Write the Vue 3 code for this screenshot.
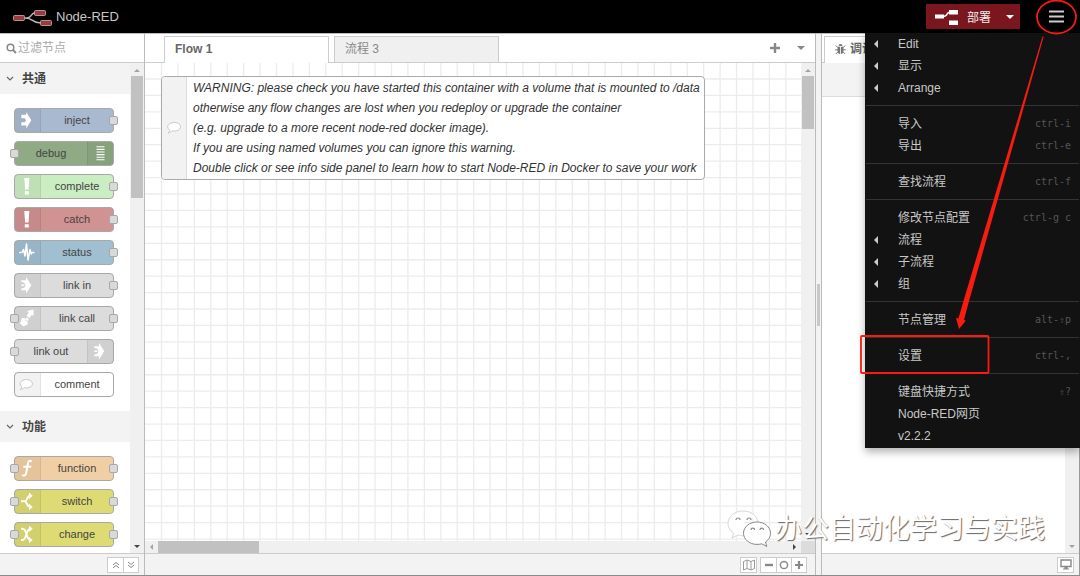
<script setup>
import { ref } from 'vue'

const filter = ref('')

const categories = [
  {
    name: '共通',
    nodes: [
      { label: 'inject', color: '#a9b9cf', icon: 'inject', out: true },
      { label: 'debug', color: '#8faa84', icon: 'debug', in: true, right: true },
      { label: 'complete', color: '#caedc1', icon: 'alert', out: true },
      { label: 'catch', color: '#d19292', icon: 'alert', out: true },
      { label: 'status', color: '#a0bfd1', icon: 'status', out: true },
      { label: 'link in', color: '#dcdcdc', icon: 'link', out: true },
      { label: 'link call', color: '#dcdcdc', icon: 'call', in: true, out: true },
      { label: 'link out', color: '#dcdcdc', icon: 'link', in: true, right: true },
      { label: 'comment', color: '#ffffff', icon: 'comment' }
    ]
  },
  {
    name: '功能',
    nodes: [
      { label: 'function', color: '#f1cfa4', icon: 'function', in: true, out: true },
      { label: 'switch', color: '#dedb74', icon: 'switch', in: true, out: true },
      { label: 'change', color: '#dedb74', icon: 'change', in: true, out: true }
    ]
  }
]

const menu = [
  [{ label: 'Edit', sub: true }, { label: '显示', sub: true }, { label: 'Arrange', sub: true }],
  [{ label: '导入', key: 'ctrl-i' }, { label: '导出', key: 'ctrl-e' }],
  [{ label: '查找流程', key: 'ctrl-f' }],
  [
    { label: '修改节点配置', key: 'ctrl-g c' },
    { label: '流程', sub: true },
    { label: '子流程', sub: true },
    { label: '组', sub: true }
  ],
  [{ label: '节点管理', key: 'alt-⇧p' }],
  [{ label: '设置', key: 'ctrl-,' }],
  [{ label: '键盘快捷方式', key: '⇧?' }, { label: 'Node-RED网页' }, { label: 'v2.2.2' }]
]

const warning = [
  'WARNING: please check you have started this container with a volume that is mounted to /data',
  'otherwise any flow changes are lost when you redeploy or upgrade the container',
  '(e.g. upgrade to a more recent node-red docker image).',
  'If you are using named volumes you can ignore this warning.',
  'Double click or see info side panel to learn how to start Node-RED in Docker to save your work'
]

const step = 16.43
const lines = Array.from({ length: 130 }, (_, i) => i * step)
</script>

<template>
  <div class="app">
    <header class="top">
      <svg class="logo" width="40" height="18" viewBox="0 0 40 18" aria-hidden="true">
        <path d="M12 9C20 9 17 4 22 4M12 9C21 9 18 14 28 14" fill="none" stroke="#bbb" stroke-width="1.4" />
        <g fill="#9c3a3e" stroke="#c9b3b3" stroke-width="0.8">
          <rect x="0.5" y="6.5" width="11" height="5" rx="1" />
          <rect x="21.5" y="1.5" width="11" height="5" rx="1" />
          <rect x="27.5" y="11.5" width="11" height="5" rx="1" />
        </g>
      </svg>
      <span class="brand">Node-RED</span>
      <button class="deploy" type="button">
        <svg width="24" height="16" viewBox="0 0 24 16" aria-hidden="true">
          <path d="M8 7.5C14 7.5 10 3 16 3" fill="none" stroke="#fff" stroke-width="1.4" />
          <path d="M0 5.5h9v4H0zM14 1h9v4.5h-9zM14 11.5h9V16h-9z" fill="#fff" />
        </svg>
        <span>部署</span>
        <i class="caret light"></i>
      </button>
      <button class="burger" type="button" aria-label="菜单">
        <svg width="15" height="14" viewBox="0 0 15 14"><path d="M0 1.5h15M0 6.500h15M0 11.500h15" stroke="#ccc" stroke-width="2.2" /></svg>
      </button>
    </header>

    <main class="main">
      <aside class="palette">
        <label class="search">
          <svg width="11" height="11" viewBox="0 0 11 11" aria-hidden="true">
            <circle cx="4.5" cy="4.5" r="3.300" fill="none" stroke="#888" stroke-width="1.5" />
            <path d="M7 7l3 3" stroke="#888" stroke-width="1.8" />
          </svg>
          <input v-model="filter" type="text" placeholder="过滤节点" aria-label="过滤节点" />
        </label>
        <div class="scroller">
          <div class="list">
            <section v-for="c in categories" :key="c.name">
              <h2>
                <svg width="8" height="6" viewBox="0 0 8 6" aria-hidden="true"><path d="M1 1l3 3 3-3" fill="none" stroke="#666" stroke-width="1.2" /></svg>
                {{ c.name }}
              </h2>
              <div class="nodes">
                <div v-for="n in c.nodes" :key="n.label" class="node" :class="{ right: n.right }" :style="{ backgroundColor: n.color }">
                  <span class="icon">
                    <svg width="25" height="23" viewBox="1 1 25 23" fill="#fff" aria-hidden="true">
                      <path v-if="n.icon === 'inject'" d="M7.300 6.700h5V4L17.300 12.300l-5 8.200v-3H7.300v-3.200h3.500l1.200-2-1.200-2H7.300z" />
                      <path v-else-if="n.icon === 'debug'" d="M9.500 5.800h8M9.500 8.400h8M9.500 11h8M9.500 13.600h8M9.500 16.200h8M9.500 18.800h8" stroke="#fff" stroke-width="1.1" />
                      <path v-else-if="n.icon === 'alert'" d="M10.300 4h5l-.8 11.500h-3.400zM10.800 17.200h4v3.200h-4z" />
                      <path v-else-if="n.icon === 'status'" d="M5 12.500h3l1.500-3 1.500 6.500L12.500 4l1.500 16 2-10.500 1.300 4.500.7-1.500h2.500" fill="none" stroke="#fff" stroke-width="1.500" stroke-linejoin="round" />
                      <path v-else-if="n.icon === 'link'" d="M12 4l5.300 8.300L12 20.500v-3.200H7.300v-1.800c5.500 0 5.500-6.400 0-6.400V7.300H12zM7.300 11.500h3v1.600h-3z" />
                      <g v-else-if="n.icon === 'call'">
                        <path d="M13 5l6.500-1.500V10l-1.700-1.200-2.300 3.200-3-2.200 2.300-3.200z" />
                        <path d="M8 12l3 .3a3 3 0 0 0 2.800 3.400l-.3 2.800-4 2-3.500-3z" />
                        <circle cx="13" cy="13.200" r="1.600" />
                      </g>
                      <path v-else-if="n.icon === 'comment'" d="M12.500 7.500c3.500 0 6 1.900 6 4.200s-2.500 4.300-6 4.300c-.9 0-1.500-.1-2.300-.3-.8.900-2 1.700-3.900 1.900.9-.8 1.400-1.700 1.500-2.700-1-.8-1.600-1.900-1.600-3.200 0-2.300 2.700-4.200 6.300-4.200z" stroke="#c8c8c8" stroke-width="1" />
                      <path v-else-if="n.icon === 'function'" d="M17.800 5.500c-2-1.500-3.500-.5-4 2.500l-1.500 8.500c-.4 2.500-1.800 4-4.200 2.500M9.300 10.800h8" fill="none" stroke="#fff" stroke-width="1.900" />
                      <g v-else-if="n.icon === 'switch'">
                        <path d="M7 12.300h4c2.500 0 1.500-5.600 5.500-5.600M10.500 12.300c3 0 2 5.700 6 5.700" fill="none" stroke="#fff" stroke-width="2" />
                        <path d="M15 3.500l3.700 3.200L15 10zM15 14.800l3.700 3.200-3.700 3.300z" />
                      </g>
                      <g v-else>
                        <path d="M7 6.700h1.500c5 0 3 11.300 8 11.300M7 18h1.500c5 0 3-11.300 8-11.300" fill="none" stroke="#fff" stroke-width="1.900" />
                        <path d="M15 3.500l3.700 3.200L15 10zM15 14.800l3.700 3.200-3.700 3.300z" />
                      </g>
                    </svg>
                  </span>
                  <span class="label">{{ n.label }}</span>
                  <i v-if="n.in" class="port in"></i>
                  <i v-if="n.out" class="port out"></i>
                </div>
              </div>
            </section>
          </div>
          <div class="vbar palette-bar"><i class="up"></i><b></b><i class="down dark"></i></div>
        </div>
        <footer class="foot end">
          <div class="group">
            <button type="button" aria-label="全部折叠"><svg width="8" height="8" viewBox="0 0 8 8"><path d="M1 4l3-2.500L7 4M1 7l3-2.500L7 7" fill="none" stroke="#888" /></svg></button>
            <button type="button" aria-label="全部展开"><svg width="8" height="8" viewBox="0 0 8 8"><path d="M1 1l3 2.500L7 1M1 4l3 2.500L7 4" fill="none" stroke="#888" /></svg></button>
          </div>
        </footer>
      </aside>

      <section class="work">
        <nav class="tabs">
          <a class="tab active" href="#flow1">Flow 1</a>
          <a class="tab" href="#flow3">流程 3</a>
          <span class="tools">
            <button type="button" aria-label="添加流程"><svg width="10" height="10" viewBox="0 0 10 10"><path d="M5 0v10M0 5h10" stroke="#888" stroke-width="2.400" /></svg></button>
            <button type="button" aria-label="流程列表"><i class="caret"></i></button>
          </span>
        </nav>
        <div class="canvas-row">
          <div class="canvas">
            <svg class="grid" width="100%" height="100%" aria-hidden="true">
              <g stroke="#ececec" stroke-width="1.300">
                <line v-for="p in lines" :key="'v' + p" :x1="p + 16.5" :x2="p + 16.5" y1="0" y2="100%" />
                <line v-for="p in lines" :key="'h' + p" :y1="p + 16" :y2="p + 16" x1="0" x2="100%" />
              </g>
            </svg>
            <div class="note">
              <span class="note-icon">
                <svg width="16" height="14" viewBox="0 0 16 14" aria-hidden="true">
                  <path d="M8.500 1.500c3.500 0 6 1.900 6 4.200s-2.500 4.300-6 4.300c-.9 0-1.500-.1-2.300-.3-.8.900-2 2-4.200 2.200 1.100-.8 1.700-2 1.800-3C2.700 8.100 1.700 7 1.700 5.700c0-2.300 3.200-4.200 6.800-4.200z" fill="#fff" stroke="#c8c8c8" />
                </svg>
              </span>
              <p><span v-for="w in warning" :key="w">{{ w }}</span></p>
            </div>
          </div>
          <div class="vbar work-bar"><i class="up"></i><b></b><i class="down dark"></i></div>
        </div>
        <div class="hbar"><i class="prev"></i><b></b><i class="next"></i><em></em></div>
        <footer class="foot end work-foot">
          <div class="group">
            <button type="button" aria-label="导航器"><svg width="12" height="12" viewBox="0 0 12 12"><path d="M.5 2.500L4 1l4 1.500L11.500 1v8.500L8 11 4 9.500.5 11zM4 1v8.500M8 2.500V11" fill="none" stroke="#999" /></svg></button>
          </div>
          <div class="group">
            <button type="button" aria-label="缩小"><svg width="10" height="10" viewBox="0 0 10 10"><path d="M1 5h8" stroke="#888" stroke-width="2.400" /></svg></button>
            <button type="button" aria-label="重置缩放"><svg width="10" height="10" viewBox="0 0 10 10"><circle cx="5" cy="5" r="3.600" fill="none" stroke="#888" stroke-width="1.500" /></svg></button>
            <button type="button" aria-label="放大"><svg width="10" height="10" viewBox="0 0 10 10"><path d="M5 1v8M1 5h8" stroke="#888" stroke-width="2.200" /></svg></button>
          </div>
        </footer>
      </section>

      <div class="separator"><i></i></div>

      <aside class="side">
        <nav class="tabs side-tabs">
          <a class="tab active" href="#debug">
            <svg width="11" height="12" viewBox="0 0 11 12" aria-hidden="true">
              <path d="M3.500 3a2 2 0 0 1 4 0zM2.500 3.800h2.600V11C3.500 11 2.500 9.500 2.500 8zM5.900 3.800h2.600V8c0 1.500-1 3-2.600 3z" fill="#777" />
              <path d="M.8 2.500l2 2M10.200 2.500l-2 2M.2 6.800h2.600M8.200 6.800h2.600M.8 11l2-2M10.200 11l-2-2" stroke="#777" />
            </svg>
            调试
          </a>
        </nav>
        <div class="side-tools"></div>
        <div class="side-body"><div class="vbar"><span></span><i class="down"></i></div></div>
        <footer class="foot end side-foot">
          <div class="group">
            <button type="button" aria-label="打开窗口"><svg width="12" height="11" viewBox="0 0 12 11"><path d="M1 1h10v6.500H1z" fill="none" stroke="#888" stroke-width="1.400" /><path d="M4.500 8h3v1.500H9v1H3v-1h1.500z" fill="#888" /></svg></button>
          </div>
        </footer>
      </aside>
    </main>

    <ul class="menu">
      <template v-for="(g, i) in menu" :key="i">
        <li v-if="i" class="divider"></li>
        <li v-for="m in g" :key="m.label">
          <a href="#menu"><i :class="{ arrow: m.sub }"></i><span>{{ m.label }}</span><kbd>{{ m.key }}</kbd></a>
        </li>
      </template>
    </ul>

    <svg class="marks" width="230" height="380" viewBox="850 0 230 380" aria-hidden="true">
      <ellipse cx="1056.500" cy="17" rx="19.500" ry="16.500" fill="none" stroke="#f71b10" stroke-width="1.800" />
      <path d="M1042.500 36.500h1.200L968.500 303l-4.500 17 1.800.8-6.800 8.200-3-11 2.400.6L963.500 301z" fill="#f71b10" />
      <rect x="861" y="336" width="127.500" height="37" rx="1" fill="none" stroke="#f71b10" stroke-width="1.800" />
    </svg>

    <div class="watermark">
      <svg width="46" height="40" viewBox="0 0 46 40" aria-hidden="true">
        <path d="M16 2C7.500 2 1 7.500 1 14.500c0 4 2 7 5.500 9.500L5 29l6-3c1.500.5 3.500.8 6 .8M31 13C30 6.500 24 2 16 2" fill="#fff" stroke="#ccc" stroke-width="0.800" />
        <path d="M30 13c7.500 0 13.500 5 13.500 11.200 0 3.800-2 6.800-5 8.800l1.300 4.500-5-2.700c-1.500.4-3 .6-4.800.6-7.500 0-13.500-5-13.500-11.200S22.500 13 30 13z" fill="#fff" stroke="#888" stroke-width="1" />
        <g fill="none" stroke="#888" stroke-width="1.200"><path d="M9 11a2 2 0 0 1 4 0M20 11a2 2 0 0 1 4 0M24 21a1.800 1.800 0 0 1 3.600 0M33 21a1.800 1.800 0 0 1 3.600 0" /></g>
      </svg>
      <span>办公自动化学习与实践</span>
    </div>
  </div>
</template>

<style>
body { overflow: hidden; }
</style>

<style scoped>
* { box-sizing: border-box; }
.app { position: relative; height: 100vh; display: flex; flex-direction: column; background: #fff; border-bottom: 1px solid #8c8c8c; font-family: "Liberation Sans", "Noto Sans CJK SC", sans-serif; font-size: 12px; color: #444; }
button { border: 0; margin: 0; padding: 0; background: none; font: inherit; display: flex; align-items: center; justify-content: center; }
a { color: inherit; text-decoration: none; }
svg { display: block; flex: none; }

.top { flex: none; height: 33px; background: #000; display: flex; align-items: center; padding: 0 16px 0 13px; }
.logo { margin-top: 2px; }
.brand { margin-left: 3px; font-size: 13px; line-height: 18px; color: #c7c7c7; flex: 1; }
.deploy { width: 94px; height: 25px; gap: 8px; padding: 0 6px 0 9px; background: #7a161d; color: #eee; justify-content: flex-start; }
.deploy .caret { margin-left: auto; }
.burger { width: 30px; height: 30px; margin-left: 21px; margin-right: -7px; }
.caret { border: 4px solid transparent; border-top-color: #888; border-bottom: 0; }
.caret.light { border-top-color: #fff; }

.main { flex: 1; min-height: 0; display: flex; }
.palette { flex: none; width: 145px; display: flex; flex-direction: column; border-right: 1px solid #bbb; }
.search { flex: none; height: 30px; display: flex; align-items: center; gap: 1px; padding-left: 6px; border-bottom: 1px solid #ccc; border-top: 1px solid #bbb; }
.search input { flex: 1; min-width: 0; border: 0; padding: 0; outline: 0; font: inherit; color: #444; background: none; }
.search input::placeholder { color: #aaa; }
.scroller { flex: 1; min-height: 0; display: flex; }
.list { flex: 1; min-width: 0; overflow: hidden; }
h2 { margin: 0; height: 31px; padding-left: 6px; display: flex; align-items: center; gap: 8px; background: #f3f3f3; font-size: 12px; line-height: 18px; font-weight: bold; color: #444; }
.nodes { display: flex; flex-direction: column; gap: 8px; padding: 14px 16px 14px 14px; }
.node { position: relative; height: 25px; display: flex; border: 1px solid #a8a8a8; border-radius: 4px; }
.node.right { flex-direction: row-reverse; }
.icon { width: 26px; background: rgba(0, 0, 0, 0.05); border-right: 1px solid rgba(0, 0, 0, 0.06); }
.right .icon { border-right: 0; border-left: 1px solid rgba(0, 0, 0, 0.06); }
.label { flex: 1; text-align: center; font-size: 11px; line-height: 23px; color: #444; }
.port { position: absolute; top: 7px; width: 9px; height: 9px; background: #d9d9d9; border: 1px solid #a8a8a8; border-radius: 2px; }
.port.in { left: -5px; }
.port.out { right: -5px; }

.vbar { flex: none; width: 14px; padding: 1px; background: #f0f0f0; display: flex; flex-direction: column; align-items: center; }
.vbar b { width: 12px; background: #c1c1c1; margin-bottom: auto; }
.vbar span { flex: 1; }
.palette-bar b { height: 122px; }
.work-bar b { height: 53px; }
.up, .down { border: 3px solid transparent; }
.up { border-bottom-color: #a3a3a3; border-top: 0; margin: 5px 0 4px; }
.down { border-top-color: #a3a3a3; border-bottom: 0; margin: 4px 0; }
.down.dark { border-top-color: #444; }

.foot { flex: none; height: 22px; background: #f3f3f3; border-top: 1px solid #ccc; display: flex; align-items: center; gap: 4px; padding: 0 5px; }
.end { justify-content: flex-end; }
.group { display: flex; border: 1px solid #ccc; background: #fff; }
.group button { width: 15px; height: 14px; }
.group button + button { border-left: 1px solid #ccc; }
.work-foot { gap: 3px; padding-right: 8px; }

.work { flex: 1; min-width: 0; display: flex; flex-direction: column; }
.tabs { flex: none; height: 30px; display: flex; align-items: flex-end; gap: 5px; padding-left: 19px; border-top: 1px solid #bbb; border-bottom: 1px solid #ccc; }
.tab { width: 165px; height: 26px; padding-left: 10px; line-height: 24px; border: 1px solid #ccc; border-bottom: 0; background: #f0f0f0; color: #888; }
.tab.active { background: #fff; color: #666; font-weight: bold; height: 27px; margin-bottom: -1px; }
.tools { margin-left: auto; align-self: center; display: flex; gap: 17px; padding-right: 10px; }
.canvas-row { flex: 1; min-height: 0; display: flex; }
.canvas { position: relative; flex: 1; min-width: 0; overflow: hidden; }
.grid { position: absolute; inset: 0; }
.note { position: absolute; left: 16px; top: 13px; display: flex; background: #fff; border: 1px solid #aaa; border-radius: 4px; overflow: hidden; }
.note-icon { width: 25px; background: #f2f2f2; border-right: 1px solid #ddd; display: flex; align-items: center; justify-content: center; }
.note p { margin: 0; padding: 1px 4px 1px 6px; font-size: 12px; font-style: italic; line-height: 20px; color: #333; white-space: nowrap; }
.note p span { display: block; }
.hbar { flex: none; height: 12px; background: #f0f0f0; display: flex; align-items: stretch; }
.hbar b { width: 101px; background: #c1c1c1; margin-right: auto; }
.prev, .next { align-self: center; border: 3px solid transparent; margin: 0 5px; }
.prev { border-right-color: #a3a3a3; border-left: 0; }
.next { border-left-color: #444; border-right: 0; }
.hbar em { width: 14px; background: #dcdcdc; }

.separator { flex: none; width: 7px; background: #f3f3f3; border: 1px solid #bbb; border-width: 1px 1px 0; display: flex; align-items: center; justify-content: center; }
.separator i { width: 3px; height: 42px; background: #c8c8c8; }
.side { flex: none; width: 258px; display: flex; flex-direction: column; border-right: 1px solid #999; }
.side-tabs { padding-left: 2px; }
.side-tabs .tab { display: flex; gap: 4px; }
.side-tabs svg { margin-top: 6px; }
.side-tools { height: 34px; background: #f3f3f3; border-bottom: 1px solid #ddd; }
.side-body { flex: 1; display: flex; justify-content: flex-end; }

.menu { position: absolute; top: 33px; right: 0; width: 215px; margin: 0; padding: 0 0 1px; list-style: none; background: #121212; color: #c8c8c8; box-shadow: 0 4px 8px rgba(0, 0, 0, 0.3); }
.menu a { height: 22px; display: flex; align-items: center; padding: 0 9px; line-height: 22px; }
.menu i { width: 24px; }
.menu i::before { content: ""; display: block; width: 0; }
.menu .arrow::before { border: 4px solid transparent; border-right-color: #ccc; border-left: 0; }
.menu span { flex: 1; }
.menu kbd { font-family: "DejaVu Sans Mono", monospace; font-size: 10px; color: #555; }
.divider { height: 1px; margin: 6px 1px 7px; background: #333; }
.marks { position: absolute; top: 0; right: 0; pointer-events: none; }
.watermark { position: absolute; right: 35px; bottom: 26px; display: flex; align-items: center; gap: 2px; font-size: 27px; line-height: 40px; color: #fff; text-shadow: 1px 1px 1px #666; pointer-events: none; white-space: nowrap; }
</style>
